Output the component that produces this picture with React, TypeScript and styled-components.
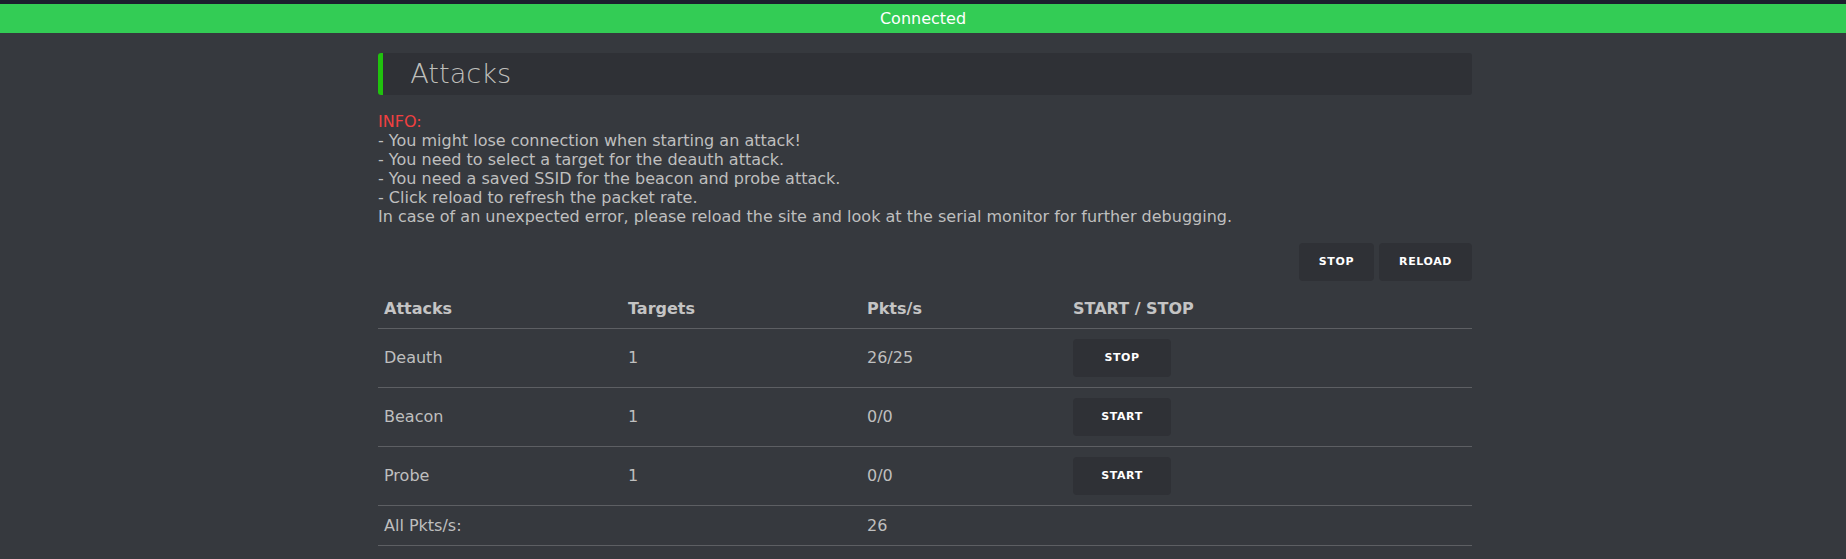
import React from "react";
import styled, { createGlobalStyle } from "styled-components";

const GlobalStyle = createGlobalStyle`
  html, body {
    margin: 0;
    padding: 0;
    background: #36393e;
  }
  body {
    font-family: "DejaVu Sans", "Liberation Sans", sans-serif;
    font-size: 16px;
    color: #bfbfbf;
  }
`;

const Page = styled.div`
  padding-left: 4px;
`;

const TopStrip = styled.div`
  height: 4px;
  background: #1b1f2d;
  margin-left: -4px;
`;

const StatusBar = styled.div`
  margin-left: -4px;
  padding: 5px;
  background: #33cc55;
  color: #ffffff;
  text-align: center;
`;

const Container = styled.main`
  width: 1094px;
  margin: 20px auto 0;
`;

const Title = styled.h1`
  margin: 0;
  font-size: 27.2px;
  font-weight: 200;
  color: #bfbfbb;
  background: #2f3136;
  padding: 0.2em 1em;
  border-left: 5px solid #20c20e;
  border-radius: 3px;
`;

const Info = styled.p`
  margin: 17px 0 17px;
`;

const Red = styled.span`
  color: #f04040;
`;

const ButtonRow = styled.div`
  display: flex;
  justify-content: flex-end;
  gap: 5px;
  margin-bottom: 8px;
`;

const Button = styled.button<{ $w?: number }>`
  height: 38px;
  ${(p) => (p.$w ? `width: ${p.$w}px; padding: 0;` : `padding: 0 20px;`)}
  border: none;
  border-radius: 4px;
  background: #2f3136;
  color: #ffffff;
  font-family: "DejaVu Sans", "Liberation Sans", sans-serif;
  font-size: 11px;
  font-weight: 700;
  letter-spacing: 0.6px;
  text-transform: uppercase;
  line-height: 38px;
  cursor: pointer;
  white-space: nowrap;
`;

const Table = styled.table`
  width: 100%;
  border-collapse: collapse;
  table-layout: fixed;
`;

const Col = styled.col<{ $w?: number }>`
  ${(p) => (p.$w ? `width: ${p.$w}px;` : "")}
`;

const Th = styled.th`
  text-align: left;
  font-weight: 700;
  padding: 10px 6px;
  border-bottom: 1px solid #5d5f63;
  color: #c4c4c4;
`;

const Td = styled.td`
  text-align: left;
  padding: 10px 6px;
  border-bottom: 1px solid #5d5f63;
  vertical-align: middle;
`;

type Attack = { name: string; targets: string; pkts: string; running: boolean };

const attacks: Attack[] = [
  { name: "Deauth", targets: "1", pkts: "26/25", running: true },
  { name: "Beacon", targets: "1", pkts: "0/0", running: false },
  { name: "Probe", targets: "1", pkts: "0/0", running: false },
];

export default function App() {
  return (
    <Page>
      <GlobalStyle />
      <TopStrip />
      <StatusBar>Connected</StatusBar>
      <Container>
        <Title>Attacks</Title>
        <Info>
          <Red>INFO:</Red>
          <br />- You might lose connection when starting an attack!
          <br />- You need to select a target for the deauth attack.
          <br />- You need a saved SSID for the beacon and probe attack.
          <br />- Click reload to refresh the packet rate.
          <br />
          In case of an unexpected error, please reload the site and look at the serial monitor for further debugging.
        </Info>
        <ButtonRow>
          <Button>Stop</Button>
          <Button>Reload</Button>
        </ButtonRow>
        <Table>
          <colgroup>
            <Col $w={244} />
            <Col $w={239} />
            <Col $w={206} />
            <Col />
          </colgroup>
          <thead>
            <tr>
              <Th>Attacks</Th>
              <Th>Targets</Th>
              <Th>Pkts/s</Th>
              <Th>START / STOP</Th>
            </tr>
          </thead>
          <tbody>
            {attacks.map((a) => (
              <tr key={a.name}>
                <Td>{a.name}</Td>
                <Td>{a.targets}</Td>
                <Td>{a.pkts}</Td>
                <Td>
                  <Button $w={98}>{a.running ? "Stop" : "Start"}</Button>
                </Td>
              </tr>
            ))}
            <tr>
              <Td>All Pkts/s:</Td>
              <Td></Td>
              <Td>26</Td>
              <Td></Td>
            </tr>
          </tbody>
        </Table>
      </Container>
    </Page>
  );
}
